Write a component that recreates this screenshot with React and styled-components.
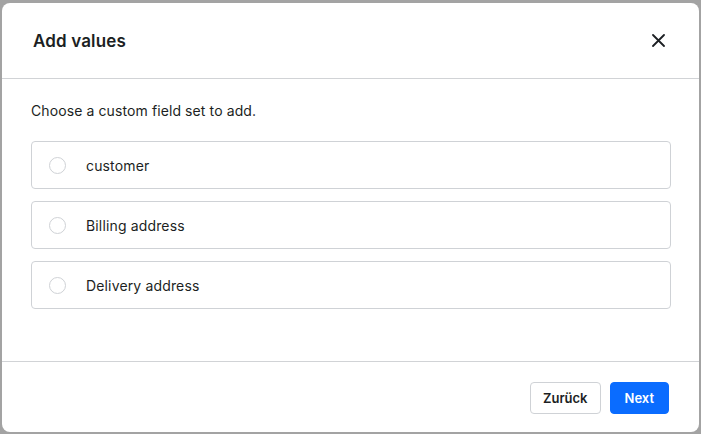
import React, { useState } from 'react';
import styled, { createGlobalStyle } from 'styled-components';

const GlobalStyle = createGlobalStyle`
  html, body {
    margin: 0;
    padding: 0;
    background: #a3a3a3;
    font-family: Inter, "Noto Sans", sans-serif;
    color: #1c1f23;
  }
`;

const Overlay = styled.div`
  width: 701px;
  height: 434px;
  padding: 3px 2px 2px 2px;
  box-sizing: border-box;
`;

const Modal = styled.div`
  background: #fff;
  border-radius: 8px;
  height: 100%;
  display: flex;
  flex-direction: column;
  overflow: hidden;
`;

const Header = styled.header`
  height: 76px;
  box-sizing: border-box;
  display: flex;
  align-items: center;
  justify-content: space-between;
  padding: 0 31px 0 31px;
  border-bottom: 1px solid #d1d3d6;
`;

const Title = styled.h2`
  margin: 0;
  font-size: 17px;
  font-weight: 600;
  letter-spacing: 0.15px;
`;

const CloseButton = styled.button`
  border: none;
  background: none;
  padding: 0;
  width: 20px;
  height: 20px;
  display: flex;
  align-items: center;
  justify-content: center;
  color: #1c1f23;
  cursor: pointer;
`;

const Body = styled.div`
  flex: 1;
  padding: 23px 28px 0 29px;
`;

const Intro = styled.p`
  margin: 0 0 22px 0;
  font-size: 14px;
  letter-spacing: 0.1px;
`;

const OptionList = styled.div`
  display: flex;
  flex-direction: column;
  gap: 12px;
`;

const Option = styled.label`
  height: 48px;
  box-sizing: border-box;
  border: 1px solid ${(p) => (p.$selected ? '#0a6cff' : '#cfd2d6')};
  border-radius: 4px;
  display: flex;
  align-items: center;
  padding-left: 17px;
  gap: 20px;
  font-size: 14px;
  letter-spacing: 0.15px;
  cursor: pointer;
`;

const Radio = styled.span`
  width: 15px;
  height: 15px;
  border-radius: 50%;
  border: 1px solid ${(p) => (p.$selected ? '#0a6cff' : '#cfd2d6')};
  box-shadow: ${(p) => (p.$selected ? 'inset 0 0 0 4px #0a6cff' : 'none')};
  flex-shrink: 0;
`;

const Footer = styled.footer`
  height: 71px;
  box-sizing: border-box;
  border-top: 1px solid #d1d3d6;
  display: flex;
  justify-content: flex-end;
  align-items: flex-start;
  gap: 9px;
  padding: 20px 30px 0 0;
`;

const Button = styled.button`
  height: 32px;
  padding: 0 ${(p) => (p.$primary ? '14px' : '12px')};
  border-radius: 4px;
  font-family: Inter, "Noto Sans", sans-serif;
  font-size: 13px;
  font-weight: 600;
  cursor: pointer;
  border: 1px solid ${(p) => (p.$primary ? '#0a6cff' : '#cfd2d6')};
  background: ${(p) => (p.$primary ? '#0a6cff' : '#fff')};
  color: ${(p) => (p.$primary ? '#fff' : '#1c1f23')};
`;

const options = ['customer', 'Billing address', 'Delivery address'];

const App = () => {
  const [selected, setSelected] = useState(null);

  return (
    <Overlay>
      <GlobalStyle />
      <Modal>
        <Header>
          <Title>Add values</Title>
          <CloseButton aria-label="Close">
            <svg width="13" height="13" viewBox="0 0 13 13">
              <path d="M1 1 L12 12 M12 1 L1 12" stroke="currentColor" strokeWidth="1.8" strokeLinecap="round" />
            </svg>
          </CloseButton>
        </Header>
        <Body>
          <Intro>Choose a custom field set to add.</Intro>
          <OptionList>
            {options.map((o) => (
              <Option key={o} $selected={selected === o} onClick={() => setSelected(o)}>
                <Radio $selected={selected === o} />
                {o}
              </Option>
            ))}
          </OptionList>
        </Body>
        <Footer>
          <Button>Zurück</Button>
          <Button $primary>Next</Button>
        </Footer>
      </Modal>
    </Overlay>
  );
};

export default App;
